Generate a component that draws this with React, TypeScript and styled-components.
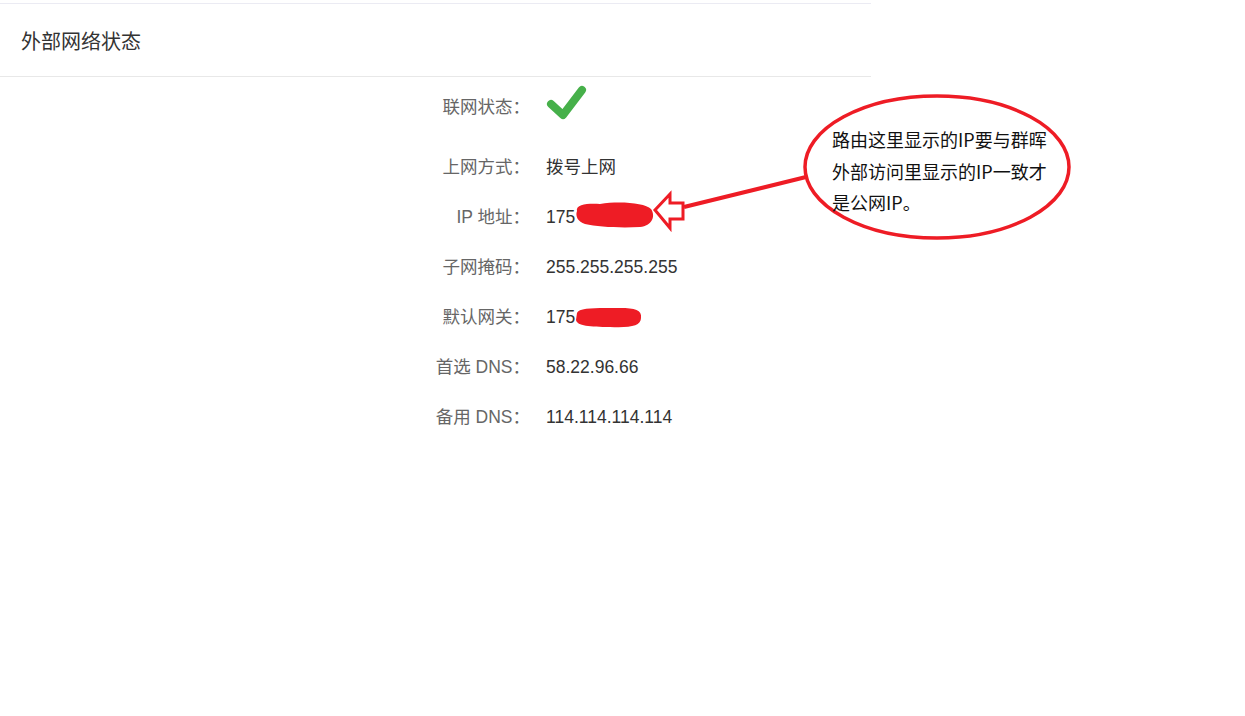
import React from "react";
import styled, { createGlobalStyle } from "styled-components";

const Global = createGlobalStyle`
  html, body { margin: 0; padding: 0; background: #fff; }
  body { font-family: "Liberation Sans", "Noto Sans CJK SC", sans-serif; }
`;

const Page = styled.div`
  position: relative;
  width: 1245px;
  height: 716px;
  overflow: hidden;
  background: #fff;
`;

const Panel = styled.section`
  width: 871px;
  margin-top: 3px;
  border-top: 1px solid #ebebf3;
`;

const Header = styled.header`
  box-sizing: border-box;
  height: 73px;
  display: flex;
  align-items: center;
  padding: 4px 0 0 21px;
  border-bottom: 1px solid #e8e8e8;
  font-size: 20px;
  line-height: 28px;
  color: #333;
`;

const Rows = styled.div`
  display: flex;
  flex-direction: column;
  padding-top: 5px;
`;

const Row = styled.div<{ $tall?: boolean }>`
  display: grid;
  grid-template-columns: 530px 1fr;
  column-gap: 16px;
  align-items: center;
  height: 50px;
  margin-bottom: ${(p) => (p.$tall ? 10 : 0)}px;
  font-size: 17.5px;
  line-height: 24px;
`;

const Label = styled.div`
  text-align: right;
  color: #666;
`;

const Value = styled.div`
  color: #333;
  display: flex;
  align-items: center;
`;

const Overlay = styled.svg`
  position: absolute;
  left: 0;
  top: 0;
  pointer-events: none;
`;

const Note = styled.div`
  position: absolute;
  left: 832px;
  top: 124px;
  width: 222px;
  font-size: 18px;
  line-height: 31.5px;
  color: #111;
  font-family: "Noto Sans CJK SC", sans-serif;
`;

const CheckIcon = styled.svg`
  display: block;
  margin-top: -8px;
`;

const Check = () => (
  <CheckIcon width="42" height="38" viewBox="0 0 42 38">
    <polyline
      points="5,20 17,31 36,6"
      fill="none"
      stroke="#46b04a"
      strokeWidth="8"
      strokeLinecap="round"
      strokeLinejoin="round"
    />
  </CheckIcon>
);

const rows: [string, React.ReactNode][] = [
  ["上网方式：", "拨号上网"],
  ["IP 地址：", "175"],
  ["子网掩码：", "255.255.255.255"],
  ["默认网关：", "175"],
  ["首选 DNS：", "58.22.96.66"],
  ["备用 DNS：", "114.114.114.114"],
];

export default function App() {
  return (
    <Page>
      <Global />
      <Panel>
        <Header>外部网络状态</Header>
        <Rows>
          <Row $tall>
            <Label>联网状态：</Label>
            <Value>
              <Check />
            </Value>
          </Row>
          {rows.map(([l, v]) => (
            <Row key={l}>
              <Label>{l}</Label>
              <Value>{v}</Value>
            </Row>
          ))}
        </Rows>
      </Panel>
      <Overlay width="1245" height="716" viewBox="0 0 1245 716">
        <path
          d="M577,211 C575,204 590,203 600,204 C620,201 645,203 651,209 C656,216 652,226 640,227 C620,228 598,227 585,224 C578,222 575,216 577,211 Z"
          fill="#ee1c25"
        />
        <path
          d="M577,313 C579,307 600,308 620,308 C635,308 642,310 641,318 C641,326 630,328 610,327 C590,327 577,326 576,320 Z"
          fill="#ee1c25"
        />
        <path
          d="M655,210 L670,194 L670,203 L683,203 L683,219 L670,219 L670,228 Z"
          fill="none"
          stroke="#ee1c25"
          strokeWidth="3"
          strokeLinejoin="miter"
        />
        <line x1="684" y1="207" x2="806" y2="177" stroke="#ee1c25" strokeWidth="4" />
        <ellipse cx="937" cy="167" rx="132" ry="71" fill="none" stroke="#ee1c25" strokeWidth="3.5" />
      </Overlay>
      <Note>路由这里显示的IP要与群晖外部访问里显示的IP一致才是公网IP。</Note>
    </Page>
  );
}
